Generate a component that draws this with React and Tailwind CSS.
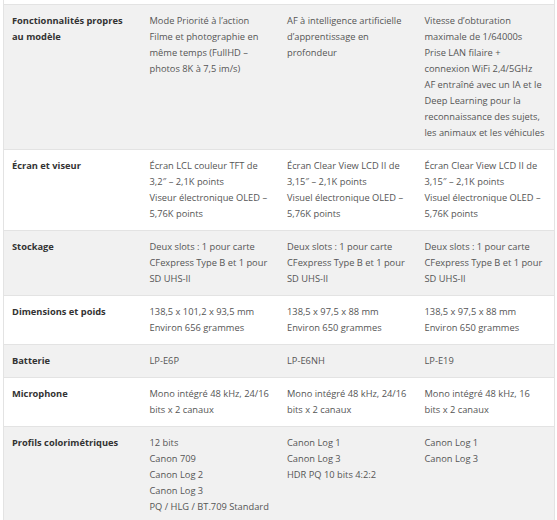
import React from 'react';

// each inner array holds the visual lines of a cell
const rows = [
  {
    label: ['Fonctionnalités propres', 'au modèle'],
    cols: [
      ['Mode Priorité à l’action', 'Filme et photographie en', 'même temps (FullHD –', 'photos 8K à 7,5 im/s)'],
      ['AF à intelligence artificielle', 'd’apprentissage en', 'profondeur'],
      [
        'Vitesse d’obturation',
        'maximale de 1/64000s',
        'Prise LAN filaire +',
        'connexion WiFi 2,4/5GHz',
        'AF entraîné avec un IA et le',
        'Deep Learning pour la',
        'reconnaissance des sujets,',
        'les animaux et les véhicules',
      ],
    ],
  },
  {
    label: ['Écran et viseur'],
    cols: [
      ['Écran LCL couleur TFT de', '3,2″ – 2,1K points', 'Viseur électronique OLED –', '5,76K points'],
      ['Écran Clear View LCD II de', '3,15″ – 2,1K points', 'Visuel électronique OLED –', '5,76K points'],
      ['Écran Clear View LCD II de', '3,15″ – 2,1K points', 'Visuel électronique OLED –', '5,76K points'],
    ],
  },
  {
    label: ['Stockage'],
    cols: [
      ['Deux slots : 1 pour carte', 'CFexpress Type B et 1 pour', 'SD UHS-II'],
      ['Deux slots : 1 pour carte', 'CFexpress Type B et 1 pour', 'SD UHS-II'],
      ['Deux slots : 1 pour carte', 'CFexpress Type B et 1 pour', 'SD UHS-II'],
    ],
  },
  {
    label: ['Dimensions et poids'],
    cols: [
      ['138,5 x 101,2 x 93,5 mm', 'Environ 656 grammes'],
      ['138,5 x 97,5 x 88 mm', 'Environ 650 grammes'],
      ['138,5 x 97,5 x 88 mm', 'Environ 650 grammes'],
    ],
  },
  {
    label: ['Batterie'],
    cols: [['LP-E6P'], ['LP-E6NH'], ['LP-E19']],
  },
  {
    label: ['Microphone'],
    cols: [
      ['Mono intégré 48 kHz, 24/16', 'bits x 2 canaux'],
      ['Mono intégré 48 kHz, 24/16', 'bits x 2 canaux'],
      ['Mono intégré 48 kHz, 16', 'bits x 2 canaux'],
    ],
  },
  {
    label: ['Profils colorimétriques'],
    cols: [
      ['12 bits', 'Canon 709', 'Canon Log 2', 'Canon Log 3', 'PQ / HLG / BT.709 Standard'],
      ['Canon Log 1', 'Canon Log 3', 'HDR PQ 10 bits 4:2:2'],
      ['Canon Log 1', 'Canon Log 3'],
    ],
  },
];

const Lines = ({ lines }) =>
  lines.map((l, k) => (
    <div key={k} className="whitespace-nowrap">
      {l}
    </div>
  ));

export default function App() {
  return (
    <div className="h-[520px] w-[557px] overflow-hidden bg-white font-['Open_Sans',sans-serif] text-[9.3px] leading-4">
      <div className="ml-[3px] w-[552px] border-x border-[#e3e3e3]">
        {/* tail of the previous row */}
        <div className="h-[5px] border-b border-[#e3e3e3] bg-white"></div>
        {rows.map((row, i) => (
          <div
            key={row.label[0]}
            className={`grid grid-cols-4 border-b border-[#e3e3e3] ${i % 2 === 0 ? 'bg-[#f1f1f1]' : 'bg-white'}`}
          >
            <div className="px-2 py-2 font-bold text-[#333]">
              <Lines lines={row.label} />
            </div>
            {row.cols.map((lines, j) => (
              <div key={j} className="px-2 py-2 text-[#555]">
                <Lines lines={lines} />
              </div>
            ))}
          </div>
        ))}
      </div>
    </div>
  );
}
